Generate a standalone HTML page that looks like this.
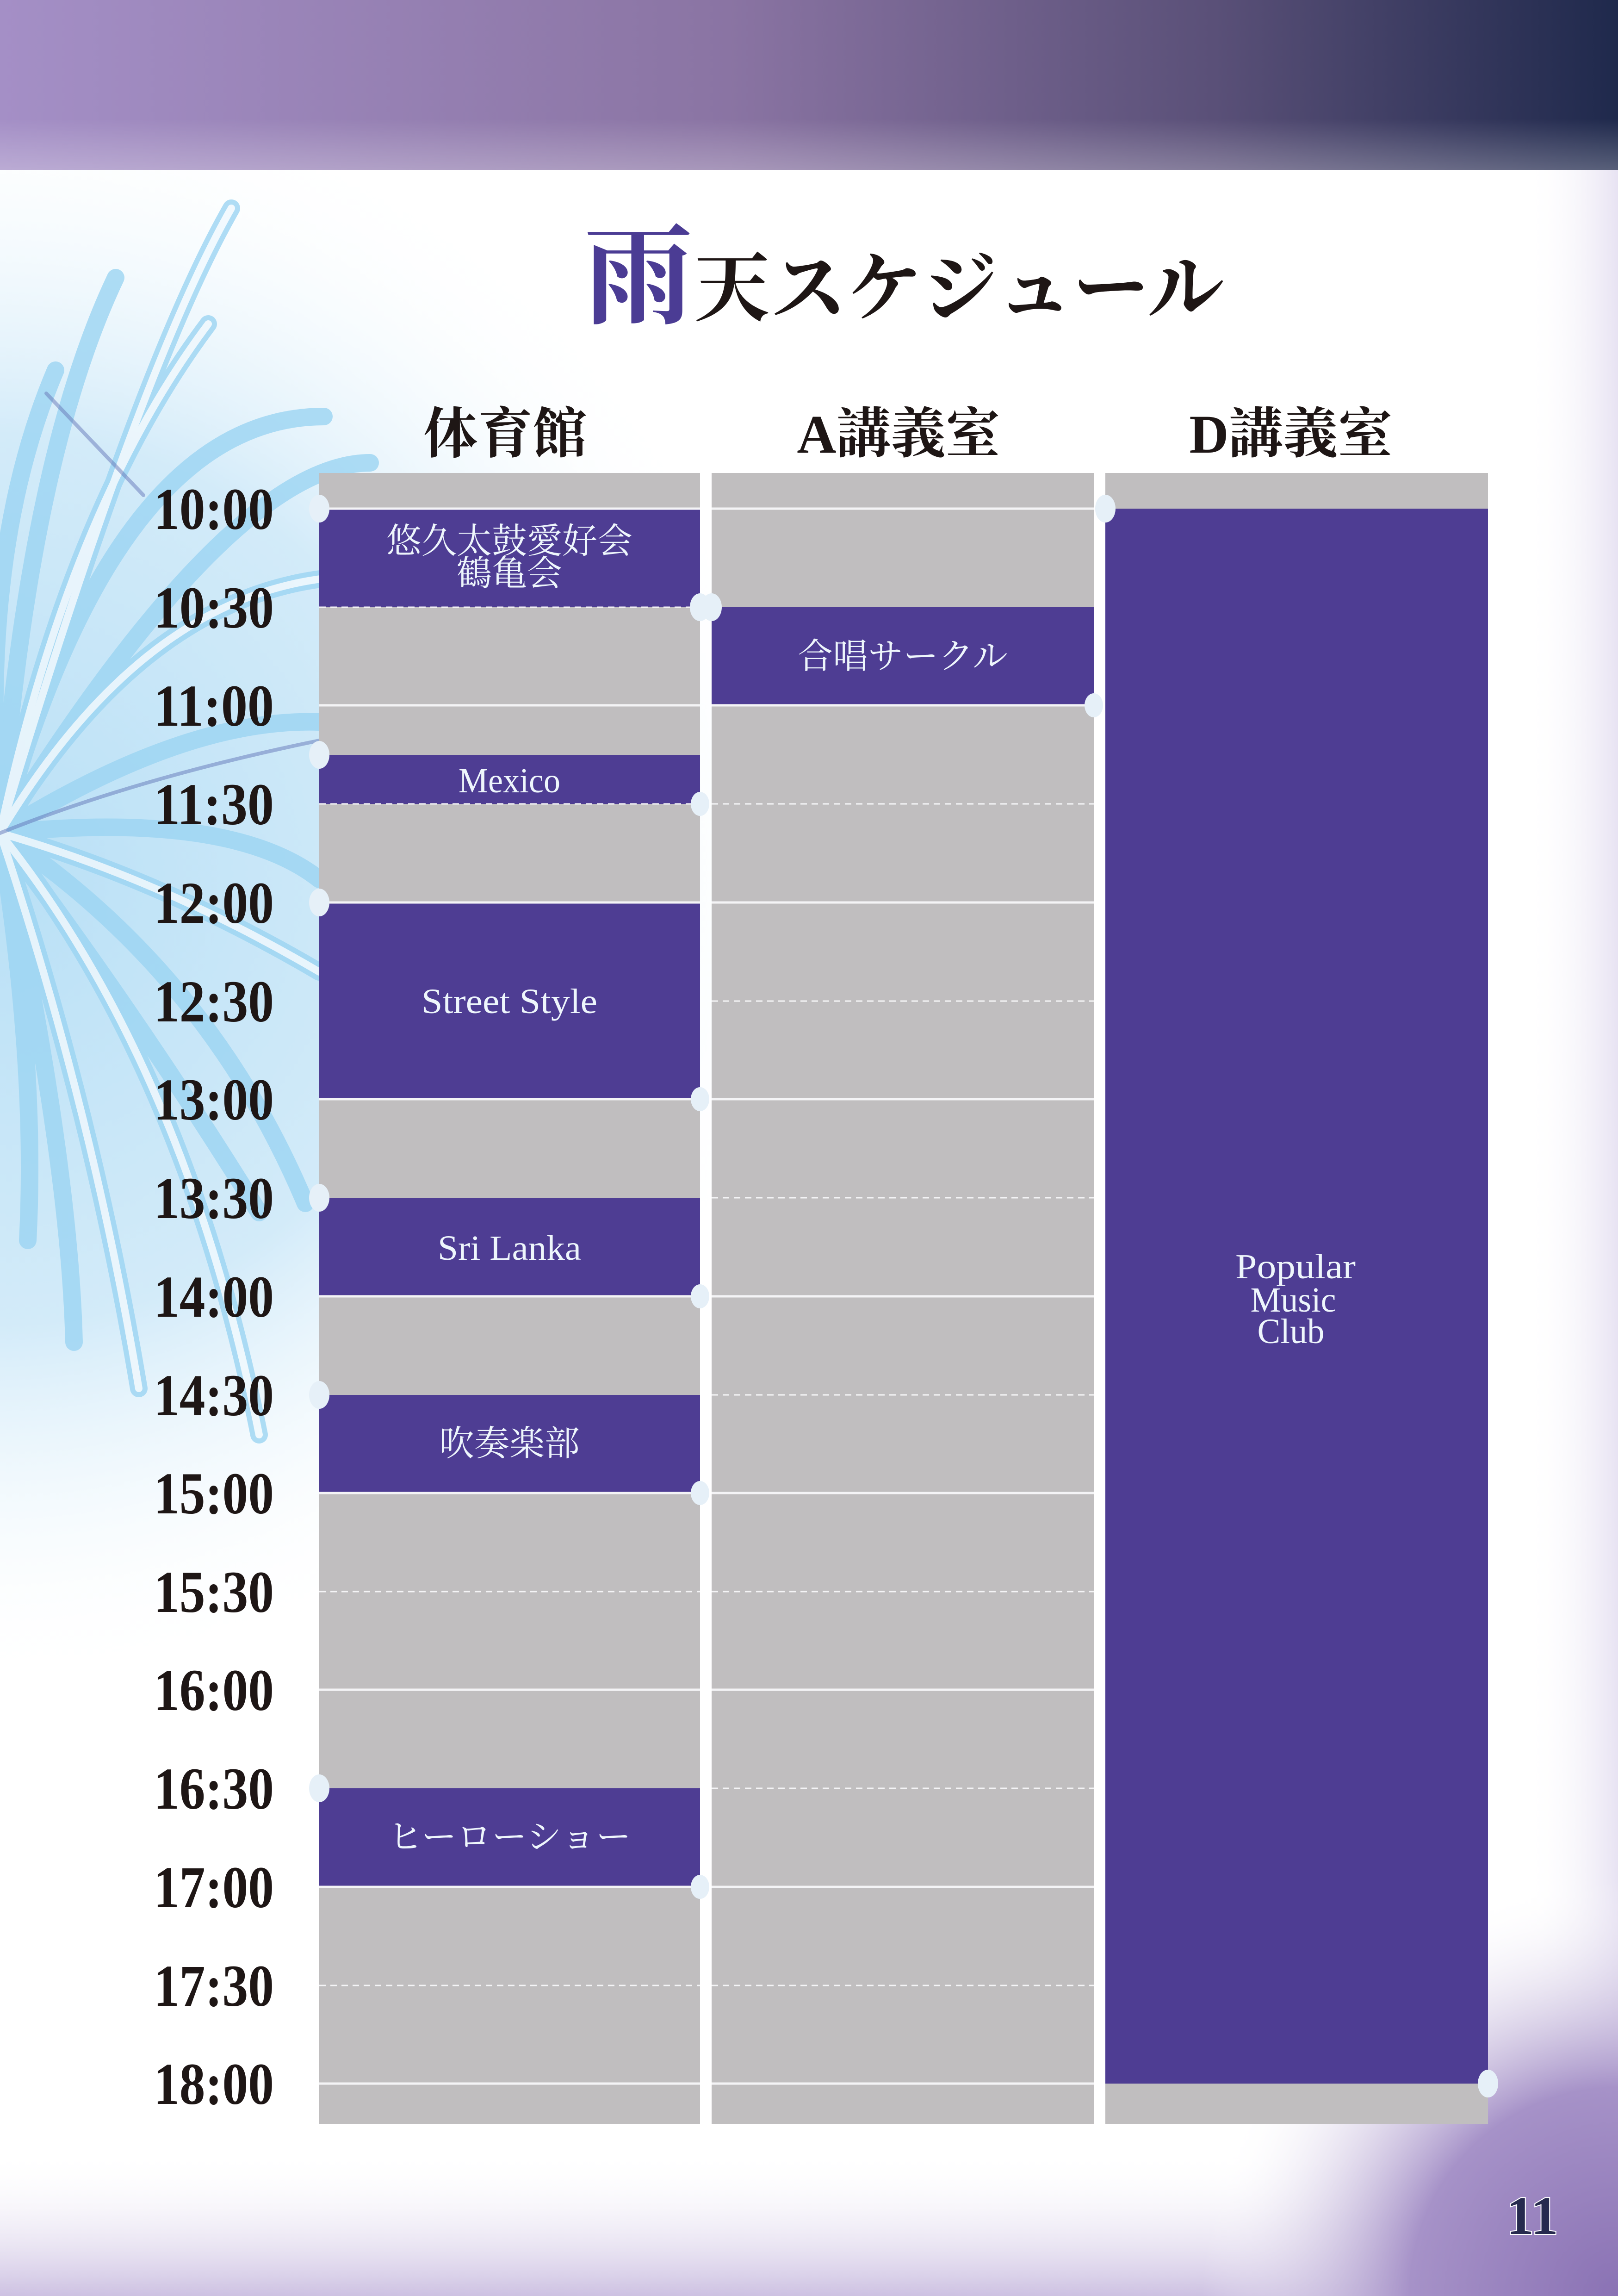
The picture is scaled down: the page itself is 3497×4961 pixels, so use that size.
<!DOCTYPE html>
<html><head><meta charset="utf-8"><style>
html,body{margin:0;padding:0;}
body{width:3497px;height:4961px;overflow:hidden;background:#fff;}
svg{display:block;}
.t{font-family:"Liberation Serif","Noto Serif CJK SC",serif;font-weight:bold;fill:#1e1615;}
.w{font-family:"Liberation Serif","Noto Serif CJK SC",serif;fill:#eef6fc;}
</style></head><body>
<svg width="3497" height="4961" viewBox="0 0 3497 4961" xmlns="http://www.w3.org/2000/svg">
<defs>
<linearGradient id="ban" x1="0" y1="0" x2="1" y2="0">
<stop offset="0" stop-color="#a48fc6"/><stop offset="0.45" stop-color="#8a74a3"/><stop offset="0.75" stop-color="#5a5078"/><stop offset="1" stop-color="#1f294c"/></linearGradient>
<linearGradient id="banf" x1="0" y1="0" x2="0" y2="1">
<stop offset="0.7" stop-color="#fff" stop-opacity="0"/><stop offset="1" stop-color="#fff" stop-opacity="0.25"/></linearGradient>
<radialGradient id="sky" cx="0" cy="1900" r="1750" gradientUnits="userSpaceOnUse">
<stop offset="0" stop-color="#b9e0f6"/><stop offset="0.55" stop-color="#d3ebf9"/><stop offset="1" stop-color="#ffffff" stop-opacity="0"/></radialGradient>
<linearGradient id="bot" x1="0" y1="0" x2="0" y2="1">
<stop offset="0" stop-color="#ffffff" stop-opacity="0"/><stop offset="1" stop-color="#cdc1e2"/></linearGradient>
<radialGradient id="corner" cx="3497" cy="4961" r="900" gradientUnits="userSpaceOnUse">
<stop offset="0" stop-color="#8a72b4"/><stop offset="0.5" stop-color="#a692c8"/><stop offset="1" stop-color="#ffffff" stop-opacity="0"/></radialGradient>
<linearGradient id="right" x1="0" y1="0" x2="1" y2="0">
<stop offset="0" stop-color="#fff" stop-opacity="0"/><stop offset="1" stop-color="#d8d0ea"/></linearGradient>
</defs>
<rect x="0" y="0" width="3497" height="4961" fill="#fff"/>
<rect x="0" y="367" width="1700" height="3300" fill="url(#sky)"/>
<rect x="3300" y="367" width="197" height="4594" fill="url(#right)" opacity="0.6"/>
<rect x="0" y="4650" width="3497" height="311" fill="url(#bot)"/>
<rect x="2500" y="3900" width="997" height="1061" fill="url(#corner)"/>
<rect x="0" y="0" width="3497" height="367" fill="url(#ban)"/>
<rect x="0" y="0" width="3497" height="367" fill="url(#banf)"/>
<!-- fireworks -->
<g fill="none" stroke-linecap="round" opacity="0.8">
<g stroke="#9cd5f3" stroke-width="38">
<path d="M0 1800 Q300 1300 700 1250"/>
<path d="M0 1800 Q150 1100 450 700"/>
<path d="M0 1800 Q60 1000 250 600"/>
<path d="M0 1800 Q400 1550 690 1560"/>
<path d="M0 1800 Q350 1900 690 2100"/>
<path d="M0 1800 Q300 2200 560 2620"/>
<path d="M0 1800 Q200 2400 300 3000"/>
<path d="M0 1800 Q80 2300 60 2680"/>
<path d="M0 1800 Q450 2100 660 2600"/>
<path d="M0 1800 Q250 900 700 900"/>
<path d="M0 1800 Q-50 1200 120 800"/>
<path d="M0 1800 Q400 2300 560 3100"/>
<path d="M0 1800 Q500 1000 800 1000"/>
<path d="M0 1800 Q300 800 500 450"/>
<path d="M0 1800 Q500 1750 690 1900"/>
<path d="M0 1800 Q150 2500 160 2900"/>
</g>
<g stroke="#ffffff" stroke-width="16" opacity="0.85">
<path d="M0 1800 Q300 1300 700 1250"/>
<path d="M0 1800 Q150 1100 450 700"/>
<path d="M0 1800 Q350 1900 690 2100"/>
<path d="M0 1800 Q200 2400 300 3000"/>
<path d="M0 1800 Q400 2300 560 3100"/>
<path d="M0 1800 Q300 800 500 450"/>
</g>
<g stroke="#4a5aa8" stroke-width="8" opacity="0.5">
<path d="M0 1800 Q300 1680 690 1600"/>
<path d="M100 850 L310 1070"/>
</g>
</g>
<!-- title -->
<text x="1262" y="680" font-family="'Liberation Serif','Noto Serif CJK JP',serif" font-weight="bold" font-size="235" fill="#4b3c94">雨</text>
<text x="1500" y="680" font-family="'Liberation Serif','Noto Serif CJK JP',serif" font-weight="bold" font-size="165" fill="#1e1615">天スケジュール</text>
<!-- headers -->
<text class="t" x="1092" y="978" font-size="118" text-anchor="middle">体育館</text>
<text class="t" x="1942" y="978" font-size="118" text-anchor="middle">A講義室</text>
<text class="t" x="2790" y="978" font-size="118" text-anchor="middle">D講義室</text>
<!-- columns -->
<rect x="690" y="1022" width="823" height="3567" fill="#c0bebf"/>
<rect x="1538" y="1022" width="826" height="3567" fill="#c0bebf"/>
<rect x="2389" y="1022" width="827" height="3567" fill="#c0bebf"/>
<!-- events -->
<g fill="#4e3d93">
<rect x="690" y="1099" width="823" height="213"/>
<rect x="690" y="1631" width="823" height="106"/>
<rect x="690" y="1950" width="823" height="425"/>
<rect x="690" y="2588" width="823" height="213"/>
<rect x="690" y="3014" width="823" height="212"/>
<rect x="690" y="3864" width="823" height="213"/>
<rect x="1538" y="1312" width="826" height="212"/>
<rect x="2389" y="1099" width="827" height="3403"/>
</g>
<!-- lines -->
<g stroke="#f4f4f6" stroke-width="5">
<path d="M690 1099H1513M1538 1099H2364M690 1524H1513M1538 1524H2364M690 1950H1513M1538 1950H2364M690 2375H1513M1538 2375H2364M690 2801H1513M1538 2801H2364M690 3226H1513M1538 3226H2364M690 3651H1513M1538 3651H2364M690 4077H1513M1538 4077H2364M690 4502H1513M1538 4502H2364"/>
</g>
<g stroke="#f4f4f6" stroke-width="3" stroke-dasharray="14 10">
<path d="M690 1312H1513M1538 1737H2364M690 1737H1513M1538 2163H2364M1538 2588H2364M1538 3014H2364M690 3439H1513M1538 3439H2364M1538 3864H2364M690 4290H1513M1538 4290H2364"/>
</g>
<!-- dots -->
<g fill="#e6f0f8">
<ellipse cx="690" cy="1099" rx="22" ry="30"/><ellipse cx="1513" cy="1312" rx="22" ry="30"/><ellipse cx="1538" cy="1312" rx="22" ry="30"/>
<ellipse cx="2364" cy="1524" rx="20" ry="26"/><ellipse cx="690" cy="1631" rx="22" ry="30"/><ellipse cx="1513" cy="1737" rx="20" ry="26"/>
<ellipse cx="690" cy="1950" rx="22" ry="30"/><ellipse cx="1513" cy="2375" rx="20" ry="26"/><ellipse cx="690" cy="2588" rx="22" ry="30"/>
<ellipse cx="1513" cy="2801" rx="20" ry="26"/><ellipse cx="690" cy="3014" rx="22" ry="30"/><ellipse cx="1513" cy="3226" rx="20" ry="26"/>
<ellipse cx="690" cy="3864" rx="22" ry="30"/><ellipse cx="1513" cy="4077" rx="20" ry="26"/>
<ellipse cx="2389" cy="1099" rx="22" ry="30"/><ellipse cx="3216" cy="4502" rx="22" ry="30"/>
</g>
<!-- event labels -->
<g class="w" font-size="76" text-anchor="middle">
<text x="1101" y="1195">悠久太鼓愛好会</text>
<text x="1101" y="1265">鶴亀会</text>
<text x="1101" y="1712" textLength="220" lengthAdjust="spacingAndGlyphs">Mexico</text>
<text x="1101" y="2189" textLength="380" lengthAdjust="spacingAndGlyphs">Street Style</text>
<text x="1101" y="2722" textLength="310" lengthAdjust="spacingAndGlyphs">Sri Lanka</text>
<text x="1101" y="3145">吹奏楽部</text>
<text x="1101" y="3995">ヒーローショー</text>
<text x="1951" y="1444">合唱サークル</text>
<text x="2800" y="2762" textLength="260" lengthAdjust="spacingAndGlyphs">Popular</text>
<text x="2795" y="2834" textLength="185" lengthAdjust="spacingAndGlyphs">Music</text>
<text x="2790" y="2902" textLength="145" lengthAdjust="spacingAndGlyphs">Club</text>
</g>
<!-- times -->
<g class="t" font-size="128" text-anchor="end" lengthAdjust="spacingAndGlyphs">
<text x="592" y="1143" textLength="260" lengthAdjust="spacingAndGlyphs">10:00</text><text x="592" y="1356" textLength="260" lengthAdjust="spacingAndGlyphs">10:30</text>
<text x="592" y="1568" textLength="260" lengthAdjust="spacingAndGlyphs">11:00</text><text x="592" y="1781" textLength="260" lengthAdjust="spacingAndGlyphs">11:30</text>
<text x="592" y="1994" textLength="260" lengthAdjust="spacingAndGlyphs">12:00</text><text x="592" y="2207" textLength="260" lengthAdjust="spacingAndGlyphs">12:30</text>
<text x="592" y="2419" textLength="260" lengthAdjust="spacingAndGlyphs">13:00</text><text x="592" y="2632" textLength="260" lengthAdjust="spacingAndGlyphs">13:30</text>
<text x="592" y="2845" textLength="260" lengthAdjust="spacingAndGlyphs">14:00</text><text x="592" y="3058" textLength="260" lengthAdjust="spacingAndGlyphs">14:30</text>
<text x="592" y="3270" textLength="260" lengthAdjust="spacingAndGlyphs">15:00</text><text x="592" y="3483" textLength="260" lengthAdjust="spacingAndGlyphs">15:30</text>
<text x="592" y="3695" textLength="260" lengthAdjust="spacingAndGlyphs">16:00</text><text x="592" y="3908" textLength="260" lengthAdjust="spacingAndGlyphs">16:30</text>
<text x="592" y="4121" textLength="260" lengthAdjust="spacingAndGlyphs">17:00</text><text x="592" y="4334" textLength="260" lengthAdjust="spacingAndGlyphs">17:30</text>
<text x="592" y="4546" textLength="260" lengthAdjust="spacingAndGlyphs">18:00</text>
</g>
<text x="3312" y="4827" text-anchor="middle" font-family="'Liberation Serif',serif" font-weight="bold" font-size="118" fill="#262a4e" stroke="#fff" stroke-width="4" paint-order="stroke">11</text>
</svg>
</body></html>
